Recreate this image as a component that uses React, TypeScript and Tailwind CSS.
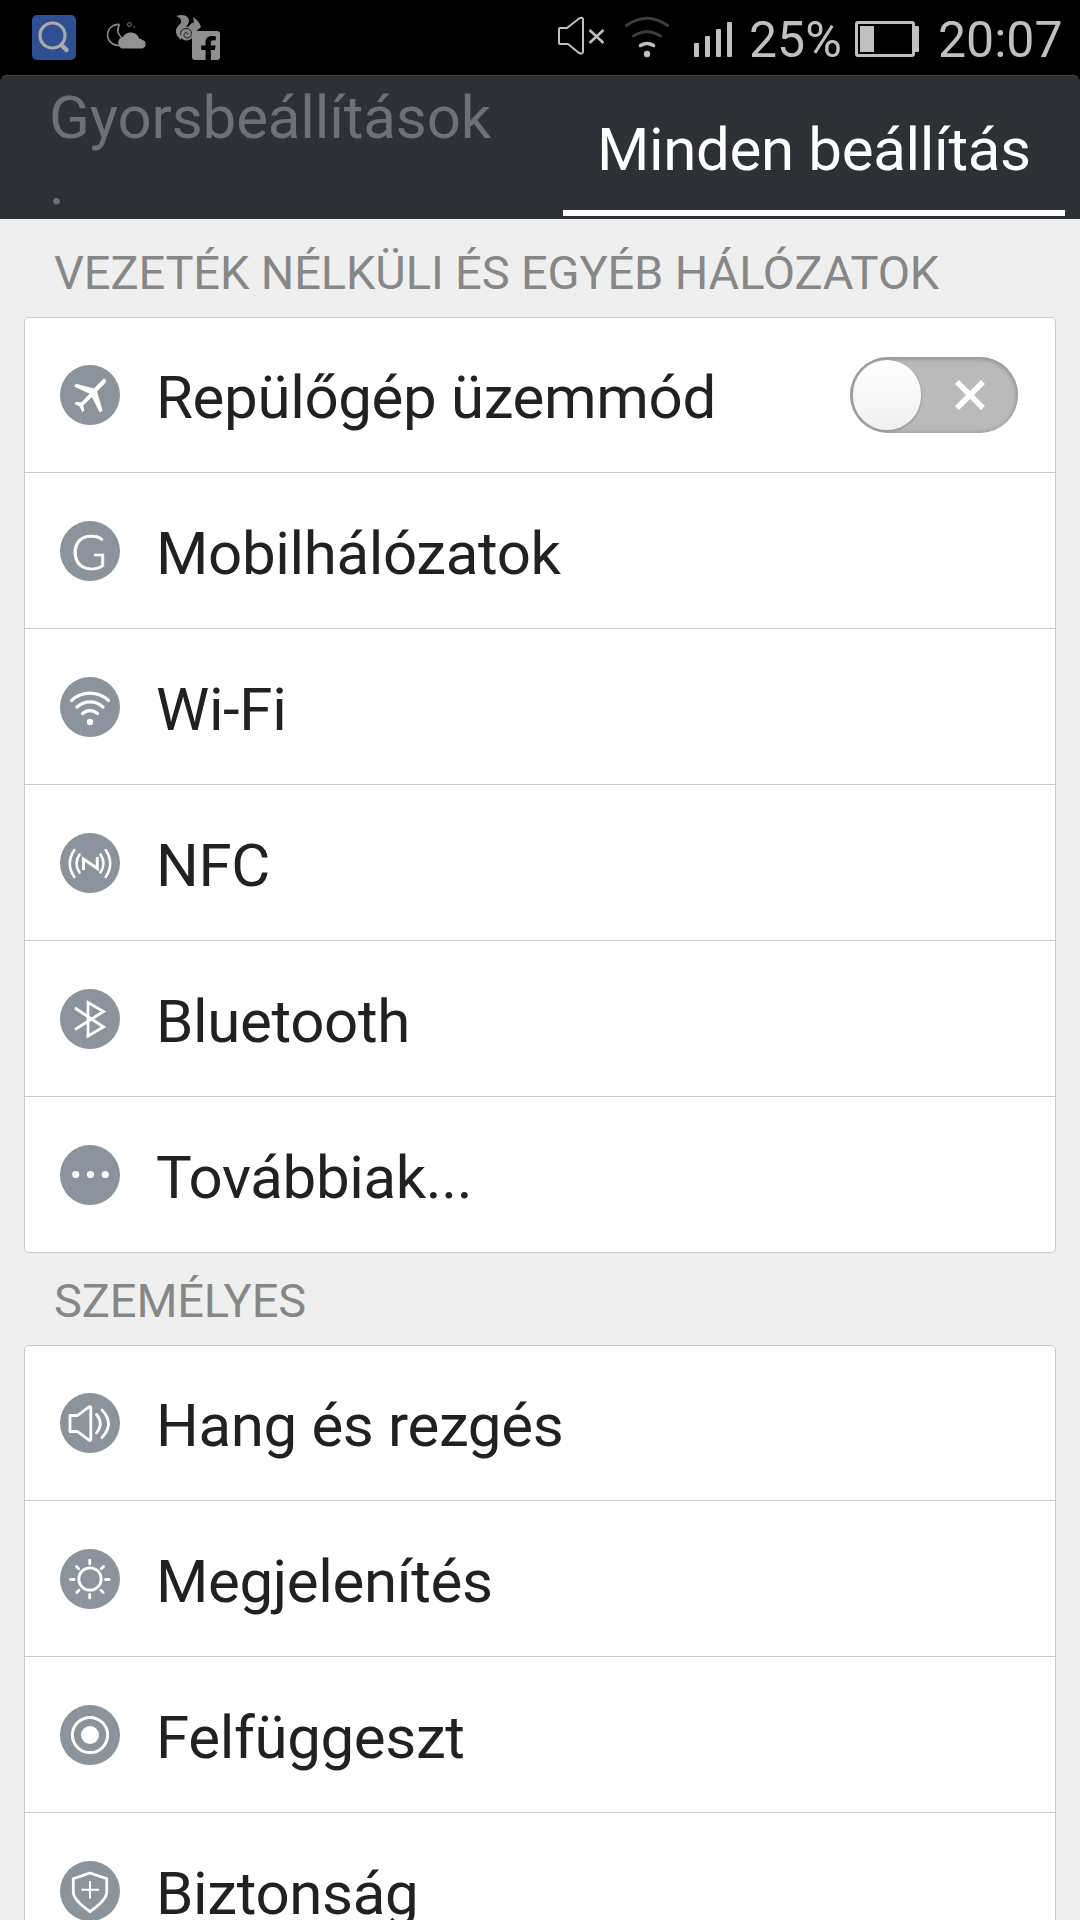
import React from "react";
import { FaFacebookF } from "react-icons/fa";

const stroke = {
  fill: "none",
  stroke: "#fff",
  strokeWidth: 2.8,
  strokeLinecap: "round" as const,
  strokeLinejoin: "round" as const,
};

const icons: Record<string, React.ReactNode> = {
  plane: (
    <path
      fill="#fff"
      d="M43.5 13.8c1.3-.6 3.3 1.2 2.7 2.7-.3.9-1 1.5-1.7 2.2L37 26.5l5.6 19.3-2.9 1.7-7.8-15.5-8.6 8.4 1 4.9-2 1.9-2.6-5.5-5.2-3 1.9-1.9 4.7.7 8.5-8.7-15.6-7.3 1.9-2.8 18.1 4.9 7-7.4c.9-.9 1.5-1.7 2.5-2.4z"
    />
  ),
  wifi: (
    <g {...stroke} strokeWidth={3.2}>
      <path d="M11.5 23.5a27 27 0 0 1 37 0M17 30a19 19 0 0 1 26 0M22.5 36.5a11 11 0 0 1 15 0" />
      <circle cx="30" cy="45" r="3.2" fill="#fff" stroke="none" />
    </g>
  ),
  nfc: (
    <g {...stroke} strokeWidth={2.6}>
      <path d="M14.3 17q-9 13.500 0 27M19.5 21.5q-6 9 0 18M45.7 17q9 13.500 0 27M40.5 21.5q6 9 0 18" />
      <path
        d="M23.5 37V26L37.3 35.5V24"
        strokeWidth={3}
        strokeLinecap="butt"
        strokeLinejoin="miter"
      />
    </g>
  ),
  bluetooth: (
    <path
      {...stroke}
      strokeLinecap="butt"
      strokeLinejoin="miter"
      d="M15 19l28.5 19-15.5 9V13.500l15.5 9L15 40.5"
    />
  ),
  more: (
    <g fill="#fff">
      <circle cx="15.7" cy="29.5" r="3.6" />
      <circle cx="30.5" cy="29.5" r="3.6" />
      <circle cx="45.3" cy="29.5" r="3.6" />
    </g>
  ),
  sound: (
    <g {...stroke}>
      <path d="M10 22.5h7.5L29 13.8q1.8-.8 1.8 1v31.4q0 1.8-1.8 1L17.5 38.5H10z" />
      <path d="M36.5 21.5q7.5 9 0 18.5M42 17q13 13.5 0 27.5" />
    </g>
  ),
  display: (
    <g {...stroke}>
      <circle cx="30" cy="30" r="11.2" />
      <path d="M29.7 11.2v3.6M29.7 45.5v3.6M10.5 30.5h3.6M45.5 30.5h3.6M16.5 17.5l2.2 2.2M41.3 19.7l2.2-2.2M16.8 43.5l2.2-2.2M41 41.3l2.2 2.2" />
    </g>
  ),
  suspend: (
    <g {...stroke}>
      <circle cx="30" cy="30" r="17.6" strokeWidth={3} />
      <circle cx="30" cy="30" r="9" fill="#fff" stroke="none" />
    </g>
  ),
  security: (
    <g {...stroke} strokeLinejoin="miter" strokeLinecap="butt">
      <path d="M30 12l16.7 5.7V31q0 8-16.7 19.5Q13.3 39 13.3 31V17.7z" />
      <path d="M30 20v17.5M21.5 28.7h17.5" strokeWidth={2} />
    </g>
  ),
};

const sections = [
  {
    title: "VEZETÉK NÉLKÜLI ÉS EGYÉB HÁLÓZATOK",
    items: [
      { icon: "plane", label: "Repülőgép üzemmód", toggle: true },
      { icon: "mobile", label: "Mobilhálózatok" },
      { icon: "wifi", label: "Wi-Fi" },
      { icon: "nfc", label: "NFC" },
      { icon: "bluetooth", label: "Bluetooth" },
      { icon: "more", label: "Továbbiak..." },
    ],
  },
  {
    title: "SZEMÉLYES",
    items: [
      { icon: "sound", label: "Hang és rezgés" },
      { icon: "display", label: "Megjelenítés" },
      { icon: "suspend", label: "Felfüggeszt" },
      { icon: "security", label: "Biztonság" },
    ],
  },
];

const RowIcon = ({ name }: { name: string }) => {
  if (name === "mobile") {
    return (
      <span className="flex h-[60px] w-[60px] shrink-0 items-center justify-center rounded-full bg-[#8b939c] pr-[2px] font-['Lato',sans-serif] text-[49px] font-light leading-[58px] text-white [-webkit-text-stroke:0.6px_white]">
        G
      </span>
    );
  }
  return (
    <span className="h-[60px] w-[60px] shrink-0 rounded-full bg-[#8b939c]">
      <svg viewBox="0 0 60 60" className="h-full w-full">
        {icons[name]}
      </svg>
    </span>
  );
};

const Toggle = () => {
  return (
    <button
      type="button"
      className="mt-[-8px] ml-auto flex h-[76px] w-[168px] items-center rounded-full bg-[#bababa] pl-[3px] shadow-[inset_0_1px_4px_1px_#8d8d8d]"
    >
      <span className="h-[70px] w-[68px] rounded-full bg-linear-to-b from-white to-[#f0f0f0] shadow-[0_1px_3px_#888]" />
      <svg viewBox="0 0 30 30" className="ml-[34px] h-[30px] w-[30px]">
        <path d="M2 2l26 26M28 2L2 28" stroke="#fff" strokeWidth="5.5" />
      </svg>
    </button>
  );
};

const StatusBar = () => {
  return (
    <div className="flex h-[75px] items-start bg-black text-[#c0c0c0]">
      <svg viewBox="0 0 44 45" className="mt-[15px] ml-8 h-[45px] w-11">
        <rect width="44" height="45" rx="5" fill="#304f92" />
        <circle cx="20.5" cy="20.5" r="12.5" fill="none" stroke="#a9aaac" strokeWidth="3.2" />
        <path d="M29.5 30l5 5" stroke="#a9aaac" strokeWidth="4.5" strokeLinecap="round" />
      </svg>
      <svg viewBox="0 0 40 28" className="mt-[21px] ml-[30px] h-7 w-10">
        <path
          d="M13.5 3.5A10.5 10.5 0 1 0 15 24M13.5 3.5Q9 11 16 17"
          fill="none"
          stroke="#8a8a8a"
          strokeWidth="1.6"
        />
        <path
          d="M16 27.5h19.500a4.300 4.300 0 0 0 .7-8.500 3 3 0 0 0-3-1.200A8.800 8.800 0 0 0 17 16 6 6 0 0 0 16 27.500z"
          fill="#929292"
        />
        <circle cx="23.5" cy="3.5" r="1.9" fill="none" stroke="#858585" />
        <circle cx="28.2" cy="6" r=".8" fill="#858585" />
      </svg>
      <div className="relative mt-[15px] ml-[30px] h-[45px] w-11">
        <svg viewBox="0 0 28 26" className="h-[26px] w-7">
          <g fill="#878787">
            <path d="M0 1Q10-2 13 4.500Q13 9 9.500 12Q7 14 7 17L4.500 25Q-1 20 0 14.500Q2 10 5 8Q6 3 0 1z" />
            <path d="M12 13Q14 8 18 7.500L17 2L21 5Q24.500 9 25 12L16 20z" />
            <circle cx="10.5" cy="18.5" r="7" />
          </g>
          <path
            d="M4.500 20q0-6.500 5.500-6.500 5 0 5.500 5 0 4-4 4.500-4-.5-3.500-3.500.5-2 2.500-2 1.500.5 1.500 2"
            fill="none"
            stroke="#222"
            strokeWidth="1"
          />
        </svg>
        <span className="absolute right-0 bottom-0 flex h-[29px] w-[28px] items-end justify-end overflow-hidden rounded-[3px] bg-[#909090]">
          <FaFacebookF className="mr-[3px] -mb-px h-[25px] w-[17px] text-black" preserveAspectRatio="none" />
        </span>
      </div>
      <svg viewBox="0 0 48 40" className="mt-4 ml-[337px] h-10 w-12">
        <g fill="none" stroke="#c0c0c0" strokeWidth="2" strokeLinejoin="round">
          <path d="M2 13q0-1 1-1h7L22 2.500q4-2 4 1v32q0 3-4 1.500L11 28H3q-1 0-1-1z" />
          <path d="M32.5 14l14 13M46.5 14l-14 13" strokeWidth="2.5" />
        </g>
      </svg>
      <svg viewBox="0 0 46 42" className="mt-4 ml-[19px] h-[42px] w-[46px]">
        <g fill="none" strokeWidth="3" strokeLinecap="round">
          <path d="M2.5 9.5Q23-5 43.5 9.5M9.5 20q13.5-8.5 27 0" stroke="#3c3c3c" />
          <path d="M16.5 29.5q6.5-4 13 0" stroke="#c0c0c0" strokeWidth="3.5" />
        </g>
        <circle cx="23" cy="38" r="3.2" fill="#c0c0c0" />
      </svg>
      <div className="mt-[22px] ml-6 flex h-[35px] items-end gap-[6px]">
        <span className="h-[14px] w-[5px] rounded-[1px] bg-[#c0c0c0]" />
        <span className="h-[21px] w-[5px] rounded-[1px] bg-[#c0c0c0]" />
        <span className="h-7 w-[5px] rounded-[1px] bg-[#c0c0c0]" />
        <span className="h-[35px] w-[5px] rounded-[1px] bg-[#c0c0c0]" />
      </div>
      <span className="mt-[11px] ml-[17px] w-[106px] text-[50px] leading-[58px]">25%</span>
      <div className="mt-[21px] flex items-center">
        <span className="flex h-9 w-[60px] items-center rounded-[3px] border-[3px] border-[#c0c0c0] pl-[2px]">
          <span className="h-[26px] w-[14px] bg-[#c0c0c0]" />
        </span>
        <span className="h-[26px] w-1 rounded-r-[1px] bg-[#c0c0c0]" />
      </div>
      <span className="mt-[11px] ml-[19px] text-[50px] leading-[58px]">20:07</span>
    </div>
  );
};

const App = () => {
  return (
    <div className="h-[1920px] w-[1080px] overflow-hidden bg-[#efefef] font-['Roboto',sans-serif]">
      <StatusBar />
      <div className="bg-black">
        <div className="flex h-36 rounded-t-[7px] border-t border-[#46494c] bg-[#2d3035] text-[60px]">
          <div className="w-[563px] overflow-hidden pl-[49px] leading-[66px] tracking-[-0.15px] text-[#6d7076]">
            <p className="mt-[9px]">
              Gyorsbeállítások
              <br />.
            </p>
          </div>
          <div className="h-[140px] w-[502px] border-b-[6px] border-white pt-10 pl-[34px] leading-[67px] tracking-[-0.35px] text-white">
            <p className="whitespace-nowrap">Minden beállítás</p>
          </div>
        </div>
      </div>
      <main className="pt-1.5">
        {sections.map((section) => (
          <section key={section.title} className="px-6">
            <h2 className="h-[92px] pt-4 pl-[30px] text-[47px] leading-[64px] tracking-[-0.13px] whitespace-nowrap text-[#878787]">
              {section.title}
            </h2>
            <ul className="rounded-[5px] border border-[#cbcbcb] bg-white">
              {section.items.map((item) => (
                <li
                  key={item.label}
                  className="flex h-[156px] items-start border-b border-[#cbcbcb] pt-12 pr-[37px] pl-[35px] first:h-[155px] first:pt-[47px] last:h-[155px] last:border-b-0"
                >
                  <RowIcon name={item.icon} />
                  <span className="mt-[3px] ml-9 text-[60px] leading-[60px] tracking-[-0.35px] whitespace-nowrap text-[#212121]">
                    {item.label}
                  </span>
                  {item.toggle && <Toggle />}
                </li>
              ))}
            </ul>
          </section>
        ))}
      </main>
    </div>
  );
};

export default App;
